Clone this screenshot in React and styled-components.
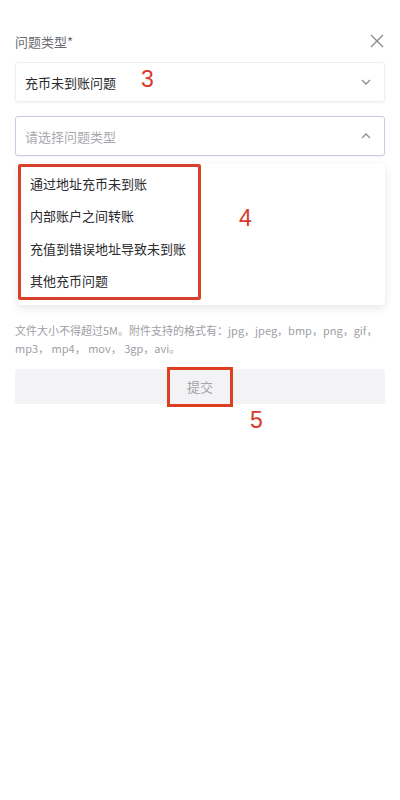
import styled, { createGlobalStyle } from "styled-components";

const options = ["通过地址充币未到账", "内部账户之间转账", "充值到错误地址导致未到账", "其他充币问题"];

const App = () => {
  return (
    <>
      <GlobalStyle />
      <Page>
        <Header>
          <Label>问题类型*</Label>
          <CloseBtn aria-label="close">
            <svg width="14" height="14" viewBox="0 0 14 14">
              <path d="M1 1 L13 13 M13 1 L1 13" stroke="#8a8a8f" strokeWidth="1.4" fill="none" />
            </svg>
          </CloseBtn>
        </Header>

        <Select>
          <SelectText>充币未到账问题</SelectText>
          <Mark $left="125px" $top="-3px">3</Mark>
          <Chevron $up={false} />
        </Select>

        <Select $focused>
          <SelectText $placeholder>请选择问题类型</SelectText>
          <Chevron $up />
        </Select>

        <Dropdown>
          <Highlight>
            {options.map((o) => (
              <Option key={o}>{o}</Option>
            ))}
          </Highlight>
          <Mark $left="221px" $top="35px">4</Mark>
        </Dropdown>

        <Hint>
          文件大小不得超过5M。附件支持的格式有：jpg，jpeg，bmp，png，gif，mp3， mp4， mov， 3gp，avi。
        </Hint>

        <SubmitWrap>
          <Submit>
            <SubmitLabel>提交</SubmitLabel>
          </Submit>
          <Mark $left="235px" $top="32px">5</Mark>
        </SubmitWrap>
      </Page>
    </>
  );
};

const Chevron = ({ $up }) => (
  <ChevronIcon width="10" height="6" viewBox="0 0 10 6">
    <path
      d={$up ? "M1 5 L5 1 L9 5" : "M1 1 L5 5 L9 1"}
      stroke="#8e8e93"
      strokeWidth="1.3"
      fill="none"
    />
  </ChevronIcon>
);

export default App;

const GlobalStyle = createGlobalStyle`
  body {
    margin: 0;
    background: #fff;
    font-family: "Noto Sans CJK SC", "Noto Sans", sans-serif;
  }
`;

const Page = styled.div`
  width: 400px;
  height: 800px;
  padding: 28px 15px 0;
  box-sizing: border-box;
  display: flex;
  flex-direction: column;
`;

const Header = styled.div`
  display: flex;
  justify-content: space-between;
  align-items: center;
  height: 26px;
`;

const Label = styled.span`
  font-size: 13px;
  color: #6b6b70;
`;

const CloseBtn = styled.div`
  display: flex;
  margin-right: 1px;
`;

const Select = styled.div`
  position: relative;
  margin-top: ${(p) => (p.$focused ? "14px" : "8px")};
  height: 38px;
  border: 1px solid ${(p) => (p.$focused ? "#c9cbe8" : "#eceef1")};
  border-radius: 3px;
  box-shadow: 0 1px 3px rgba(0, 0, 0, 0.05);
  display: flex;
  align-items: center;
  padding: 0 9px;
  justify-content: space-between;
`;

const SelectText = styled.span`
  font-size: 13px;
  color: ${(p) => (p.$placeholder ? "#a9a9ae" : "#2a2a2e")};
`;

const ChevronIcon = styled.svg`
  margin-right: 4px;
`;

const Mark = styled.span`
  position: absolute;
  left: ${(p) => p.$left};
  top: ${(p) => p.$top};
  font-family: "Liberation Sans", Arial, sans-serif;
  font-size: 23px;
  color: #d63a26;
  line-height: 38px;
`;

const Dropdown = styled.div`
  position: relative;
  margin: 8px 0 0 3px;
  height: 141px;
  border-radius: 4px;
  box-shadow: 0 3px 10px rgba(0, 0, 0, 0.1);
  background: #fff;
`;

const Highlight = styled.div`
  width: 183px;
  height: 136px;
  box-sizing: border-box;
  border: 3px solid #d9402b;
  border-radius: 2px;
  display: flex;
  flex-direction: column;
  padding: 0 0 0 9px;
`;

const Option = styled.div`
  height: 33px;
  display: flex;
  align-items: center;
  font-size: 13px;
  color: #2a2a2e;
`;

const Hint = styled.p`
  margin: 16px 0 0;
  font-size: 11px;
  line-height: 18px;
  color: #a0a0a5;
`;

const SubmitWrap = styled.div`
  position: relative;
  margin-top: 12px;
`;

const Submit = styled.div`
  height: 35px;
  background: #f3f3f5;
  border-radius: 3px;
  display: flex;
  justify-content: center;
  align-items: center;
`;

const SubmitLabel = styled.span`
  width: 66px;
  height: 40px;
  box-sizing: border-box;
  border: 3px solid #dc3f22;
  display: flex;
  align-items: center;
  justify-content: center;
  font-size: 13px;
  color: #a5a5aa;
`;
